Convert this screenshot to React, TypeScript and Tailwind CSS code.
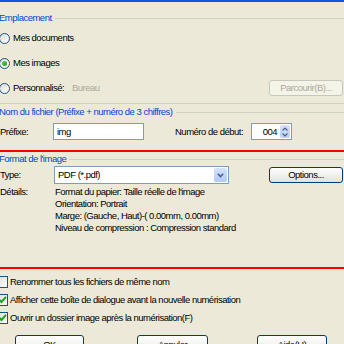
import React from "react";

const Radio = ({ checked }: { checked?: boolean }) => (
  <div className="-ml-[1px] mr-[3px] flex h-[11px] w-[11px] shrink-0 items-center justify-center rounded-full border border-[#1C5180] bg-gradient-to-br from-[#DCDCD7] to-white">
    {checked && <div className="h-[5px] w-[5px] rounded-full bg-gradient-to-br from-[#55D051] to-[#1A9A1A]" />}
  </div>
);

const Check = ({ checked }: { checked?: boolean }) => (
  <div className="-ml-[4px] mr-[2px] flex h-[12px] w-[12px] shrink-0 items-center justify-center border border-[#1C5180] bg-gradient-to-br from-[#DCDCD7] to-white">
    {checked && (
      <svg width="9" height="9" viewBox="0 0 9 9">
        <path d="M1 4.5 L3.5 7 L8 1.8" fill="none" stroke="#21A121" strokeWidth="2" />
      </svg>
    )}
  </div>
);

const GroupLabel = ({ text, className = "" }: { text: string; className?: string }) => (
  <div className={`flex h-[14px] items-center ${className}`}>
    <span className="-ml-[1px] pr-[3px] text-[#0046D5] whitespace-nowrap">{text}</span>
    <div className="h-px flex-1 bg-[#D0D0BF]" />
  </div>
);

const Button = ({ text, className = "", disabled }: { text: string; className?: string; disabled?: boolean }) => (
  <div
    className={`flex shrink-0 justify-center rounded-[3px] border ${
      disabled
        ? "border-[#C9C7BA] bg-[#F5F4EA] text-[#ACA899]"
        : "border-[#003C74] bg-gradient-to-b from-white to-[#E3E2DA] text-black"
    } ${className}`}
  >
    {text}
  </div>
);

export default function App() {
  return (
    <div className="relative flex h-[344px] w-[344px] flex-col overflow-hidden bg-[#ECE9D8] font-['Liberation_Sans',Arial,sans-serif] text-[9.5px] leading-[12px] tracking-[-0.5px] text-black">
      <div className="h-[2px] shrink-0 bg-[#0A5ADF]" />
      <GroupLabel text="Emplacement" className="mt-[9px] shrink-0" />

      <div className="mt-[5px] flex h-[16px] shrink-0 items-center">
        <Radio />
        <span>Mes documents</span>
      </div>
      <div className="mt-[9px] flex h-[16px] shrink-0 items-center">
        <Radio checked />
        <span>Mes images</span>
      </div>
      <div className="mt-[9px] flex h-[16px] shrink-0 items-center">
        <div className="flex w-[72px] items-center">
          <Radio />
          <span>Personnalisé:</span>
        </div>
        <span className="text-[#ACA899]">Bureau</span>
        <div className="flex-1" />
        <Button text="Parcourir(B)..." disabled className="mr-[1px] h-[16px] w-[74px] items-center" />
      </div>

      <div className="mt-[7px] h-px shrink-0 bg-[#D0D0BF]" />
      <GroupLabel text="Nom du fichier (Préfixe + numéro de 3 chiffres)" className="mt-[1px] shrink-0" />

      <div className="mt-[4px] flex h-[17px] shrink-0 items-center">
        <span className="w-[53px] shrink-0">Préfixe:</span>
        <div className="flex h-[17px] w-[91px] shrink-0 items-center border border-[#7F9DB9] bg-white pl-[3px]">img</div>
        <span className="ml-[31px] w-[76px] shrink-0">Numéro de début:</span>
        <div className="flex h-[17px] w-[41px] shrink-0 items-center border border-[#7F9DB9] bg-white">
          <span className="flex-1 pr-[3px] text-right">004</span>
          <div className="mr-[1px] flex h-[13px] w-[10px] flex-col items-center justify-center rounded-[2px] bg-gradient-to-b from-[#D5E2FD] to-[#B9CFF9]">
            <svg width="6" height="10" viewBox="0 0 6 10">
              <path d="M0.5 3.5 L3 1 L5.5 3.5 M0.5 6.5 L3 9 L5.5 6.5" fill="none" stroke="#4D6185" strokeWidth="1.2" />
            </svg>
          </div>
        </div>
      </div>

      <div className="mt-[10px] h-[2px] shrink-0 bg-[#FF0000]" />
      <GroupLabel text="Format de l'image" className="shrink-0" />

      <div className="flex h-[18px] shrink-0 items-center">
        <span className="w-[54px] shrink-0">Type:</span>
        <div className="flex h-[18px] w-[175px] shrink-0 items-center border border-[#7F9DB9] bg-white pl-[3px]">
          <span className="flex-1">PDF (*.pdf)</span>
          <div className="mr-[1px] flex h-[14px] w-[13px] items-center justify-center rounded-[2px] bg-gradient-to-b from-[#D5E2FD] to-[#B1C8F7]">
            <svg width="7" height="5" viewBox="0 0 7 5">
              <path d="M0.8 0.8 L3.5 3.6 L6.2 0.8" fill="none" stroke="#4D6185" strokeWidth="1.5" />
            </svg>
          </div>
        </div>
        <div className="flex-1" />
        <Button text="Options..." className="mr-[1px] h-[16px] w-[74px] items-center" />
      </div>

      <div className="mt-[2px] flex shrink-0">
        <span className="w-[55px] shrink-0">Détails:</span>
        <div className="flex flex-col whitespace-nowrap">
          <span>Format du papier: Taille réelle de l'image</span>
          <span>Orientation: Portrait</span>
          <span>Marge: (Gauche, Haut)-( 0.00mm, 0.00mm)</span>
          <span>Niveau de compression : Compression standard</span>
        </div>
      </div>

      <div className="mt-[33px] h-[2px] shrink-0 bg-[#FF0000]" />

      <div className="mt-[6px] flex h-[13px] shrink-0 items-center">
        <Check />
        <span>Renommer tous les fichiers de même nom</span>
      </div>
      <div className="mt-[5px] flex h-[13px] shrink-0 items-center">
        <Check checked />
        <span>Afficher cette boîte de dialogue avant la nouvelle numérisation</span>
      </div>
      <div className="mt-[5px] flex h-[13px] shrink-0 items-center">
        <Check checked />
        <span>Ouvrir un dossier image après la numérisation(F)</span>
      </div>

      <div className="mt-[11px] flex h-[23px] shrink-0 items-start">
        <Button text="OK" className="ml-[15px] h-[23px] w-[69px] items-start pt-[3px]" />
        <Button text="Annuler" className="ml-[53px] h-[23px] w-[71px] items-start pt-[3px]" />
        <Button text="Aide(H)" className="ml-[49px] h-[23px] w-[70px] items-start pt-[3px]" />
      </div>
    </div>
  );
}
